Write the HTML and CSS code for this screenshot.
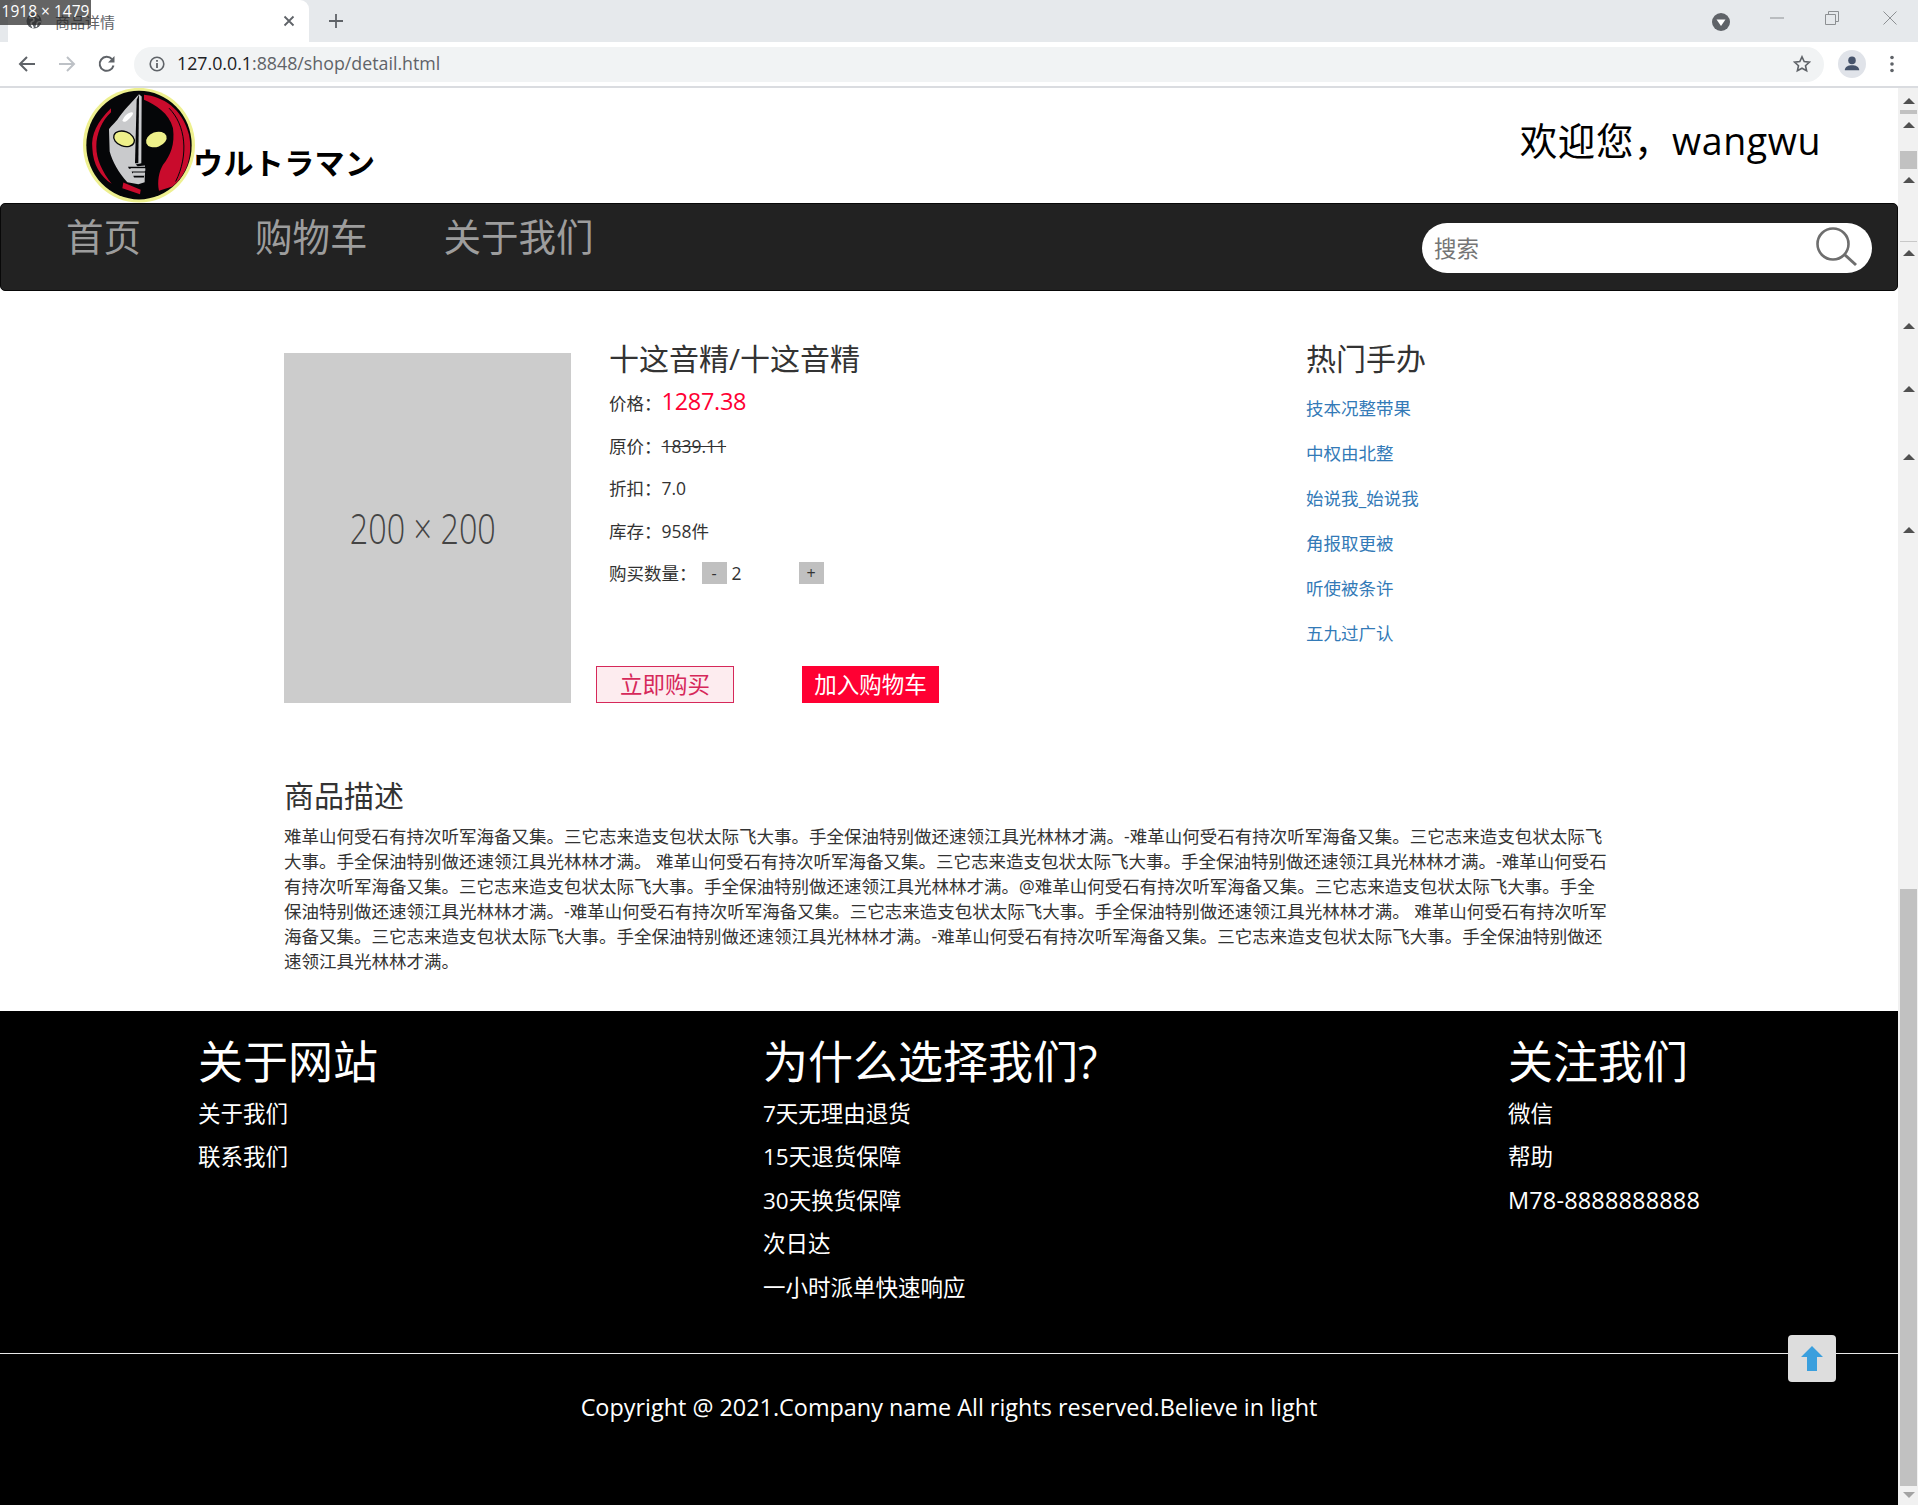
FILE: index.html
```html
<!DOCTYPE html>
<html lang="zh-CN">
<head>
<meta charset="utf-8">
<title>商品详情</title>
<link rel="stylesheet" href="styles.css">
</head>
<body>
<div class="window">
  <div class="size-badge">1918 × 1479</div>
  <div class="tabstrip">
    <div class="tab">
      <svg class="favicon" viewBox="0 0 16 16"><circle cx="8" cy="8" r="7.5" fill="#5f6368"/><path d="M3 5c3-1 5 0 5 2s-3 1-3 3 2 3 2 5" fill="none" stroke="#fff" stroke-width="1.6"/><path d="M11 2c-1 2 0 3 2 3M15 9c-2-1-4 0-4 2l-1 3" fill="none" stroke="#fff" stroke-width="1.4"/></svg>
      <span class="tab-title">商品详情</span>
      <svg class="tab-close" viewBox="0 0 12 12"><path d="M1.5 1.5l9 9M10.5 1.5l-9 9" stroke="#5f6368" stroke-width="1.8"/></svg>
    </div>
    <svg class="new-tab" viewBox="0 0 16 16"><path d="M8 1v14M1 8h14" stroke="#5f6368" stroke-width="1.8"/></svg>
    <div class="strip-spacer"></div>
    <svg class="tab-search" viewBox="0 0 18 18"><circle cx="9" cy="9" r="9" fill="#5f6368"/><path d="M4.5 6.5h9L9 13z" fill="#fff"/></svg>
    <svg class="win-btn win-min" viewBox="0 0 14 14"><path d="M0 7h14" stroke="#8d9093" stroke-width="1"/></svg>
    <svg class="win-btn win-max" viewBox="0 0 14 14"><path d="M.5 3.5h10v10H.5zM3.5 3.5V.5h10v10h-3" fill="none" stroke="#8d9093" stroke-width="1"/></svg>
    <svg class="win-btn win-close" viewBox="0 0 14 14"><path d="M.5.5l13 13M13.500.5l-13 13" stroke="#8d9093" stroke-width="1"/></svg>
  </div>
  <div class="toolbar">
    <svg class="tool-icon tool-back" viewBox="0 0 18 18"><path d="M17 9H2M9 2L2 9l7 7" fill="none" stroke="#5f6368" stroke-width="2"/></svg>
    <svg class="tool-icon tool-forward" viewBox="0 0 18 18"><path d="M1 9h15M9 2l7 7-7 7" fill="none" stroke="#bdc1c6" stroke-width="2"/></svg>
    <svg class="tool-icon tool-reload" viewBox="0 0 18 18"><path d="M15.500 10.500A7 7 0 1 1 14 4.200" fill="none" stroke="#5f6368" stroke-width="2"/><path d="M16.500 1v6.500H10z" fill="#5f6368"/></svg>
    <div class="omnibox">
      <svg class="info-icon" viewBox="0 0 16 16"><circle cx="8" cy="8" r="6.800" fill="none" stroke="#5f6368" stroke-width="1.600"/><path d="M8 7v5M8 4v1.800" stroke="#5f6368" stroke-width="1.800"/></svg>
      <span class="url"><span class="url-host">127.0.0.1</span>:8848/shop/detail.html</span>
      <svg class="star-icon" viewBox="0 0 18 18"><path d="M9 1.800l2.200 4.800 5.200.6-3.900 3.500 1.100 5.100L9 13.200l-4.600 2.600 1.100-5.100L1.600 7.200l5.200-.6z" fill="none" stroke="#5f6368" stroke-width="1.600"/></svg>
    </div>
    <div class="profile"><svg viewBox="0 0 20 20"><circle cx="10" cy="6" r="4.200" fill="#46536b"/><path d="M2 17c0-4 4-5.500 8-5.500s8 1.500 8 5.500z" fill="#46536b"/></svg></div>
    <svg class="menu-dots" viewBox="0 0 4 18"><circle cx="2" cy="2.500" r="1.800" fill="#5f6368"/><circle cx="2" cy="9" r="1.800" fill="#5f6368"/><circle cx="2" cy="15.500" r="1.800" fill="#5f6368"/></svg>
  </div>
  <div class="viewport">
    <div class="page">
      <header class="site-header">
        <div class="brand">
          <svg class="logo" viewBox="22 10 336 344">
            <ellipse cx="190" cy="181" rx="168" ry="172" fill="#eef08f"/>
            <ellipse cx="190" cy="181" rx="158" ry="163" fill="#050608"/>
            <path d="M106 70C65 110 45 150 50 190c2 50 25 85 58 107-28-37-46-72-46-112 0-40 18-80 44-103z" fill="#c90b2c"/>
            <path d="M143 293l52 22-2 13-53-18z" fill="#c90b2c"/>
            <path d="M205 30c55 5 115 40 135 120 12 60-5 120-50 155l-40 13c-6-28 0-58 12-78 23-30 36-60 30-110-12-45-52-70-87-85z" fill="#c90b2c"/>
            <path d="M280 70c50 50 60 140 20 220" fill="none" stroke="#050608" stroke-width="3"/>
            <path d="M190 28c-20 22-50 52-65 77-13 15-25 25-25 30l2 65c8 30 28 65 53 92l33 6 19-6 1-50-22 2-6-5 17-4 1-200z" fill="#c9cacc"/>
            <path d="M183 45l-5 190 10 0 2-205z" fill="#050608"/>
            <path d="M160 252h49v-6h-52zM170 265h38v-5h-40zM175 278h30v-5h-32z" fill="#050608"/>
            <path d="M165 250h44v8h-44zM172 263h36v7h-36z" fill="#c9cacc"/>
            <path d="M140 108c5-14 18-26 28-26s0 14-10 22c-6 6-14 10-18 4z" fill="#fff"/>
            <ellipse cx="145" cy="162" rx="32" ry="22" transform="rotate(20 145 162)" fill="#eef08a" stroke="#050608" stroke-width="4"/>
            <ellipse cx="242" cy="164" rx="32" ry="22" transform="rotate(-20 242 164)" fill="#eef08a"/>
          </svg>
          <span class="brand-name">ウルトラマン</span>
        </div>
        <div class="welcome">欢迎您，wangwu</div>
      </header>
      <nav class="navbar">
        <a class="nav-link nav-home">首页</a>
        <a class="nav-link nav-cart">购物车</a>
        <a class="nav-link">关于我们</a>
        <div class="search">
          <input class="search-input" placeholder="搜索">
          <svg class="search-icon" viewBox="0 0 42 40"><circle cx="17" cy="17" r="15.500" fill="none" stroke="#6e6e6e" stroke-width="2.600"/><path d="M29 28l11 10" stroke="#6e6e6e" stroke-width="3"/></svg>
        </div>
      </nav>
      <main class="content">
        <section class="product">
          <div class="product-img"><span class="img-label">200 × 200</span></div>
          <div class="product-info">
            <h3 class="heading">十这音精/十这音精</h3>
            <div class="row row-price">价格：<span class="price">1287.38</span></div>
            <div class="row">原价：<s class="old-price">1839.11</s></div>
            <div class="row">折扣：7.0</div>
            <div class="row">库存：958件</div>
            <div class="row">购买数量：<span class="qty-btn qty-minus">-</span><span class="qty-val">2</span><span class="qty-btn">+</span></div>
            <div class="actions">
              <button class="btn btn-buy">立即购买</button>
              <button class="btn btn-cart">加入购物车</button>
            </div>
          </div>
          <aside class="hot">
            <h3 class="heading">热门手办</h3>
            <ul class="hot-list">
              <li>技本况整带果</li>
              <li>中权由北整</li>
              <li>始说我_始说我</li>
              <li>角报取更被</li>
              <li>听使被条许</li>
              <li>五九过广认</li>
            </ul>
          </aside>
        </section>
        <section class="desc">
          <h3 class="heading">商品描述</h3>
          <p class="desc-text">难革山何受石有持次听军海备又集。三它志来造支包状太际飞大事。手全保油特别做还速领江具光林林才满。-难革山何受石有持次听军海备又集。三它志来造支包状太际飞大事。手全保油特别做还速领江具光林林才满。 难革山何受石有持次听军海备又集。三它志来造支包状太际飞大事。手全保油特别做还速领江具光林林才满。-难革山何受石有持次听军海备又集。三它志来造支包状太际飞大事。手全保油特别做还速领江具光林林才满。@难革山何受石有持次听军海备又集。三它志来造支包状太际飞大事。手全保油特别做还速领江具光林林才满。-难革山何受石有持次听军海备又集。三它志来造支包状太际飞大事。手全保油特别做还速领江具光林林才满。 难革山何受石有持次听军海备又集。三它志来造支包状太际飞大事。手全保油特别做还速领江具光林林才满。-难革山何受石有持次听军海备又集。三它志来造支包状太际飞大事。手全保油特别做还速领江具光林林才满。</p>
        </section>
      </main>
      <footer class="footer">
        <div class="footer-cols">
          <div class="fcol fcol-about">
            <h2 class="fhead">关于网站</h2>
            <div class="flink">关于我们</div>
            <div class="flink">联系我们</div>
          </div>
          <div class="fcol fcol-why">
            <h2 class="fhead">为什么选择我们?</h2>
            <div class="flink">7天无理由退货</div>
            <div class="flink">15天退货保障</div>
            <div class="flink">30天换货保障</div>
            <div class="flink">次日达</div>
            <div class="flink">一小时派单快速响应</div>
          </div>
          <div class="fcol">
            <h2 class="fhead">关注我们</h2>
            <div class="flink">微信</div>
            <div class="flink">帮助</div>
            <div class="flink flink-num">M78-8888888888</div>
          </div>
        </div>
        <hr class="frule">
        <div class="copyright">Copyright @ 2021.Company name All rights reserved.Believe in light</div>
        <a class="back-top"><svg viewBox="0 0 22 25"><path d="M11 0l11 11h-6v14H6V11H0z" fill="#3a9fdd"/></svg></a>
      </footer>
    </div>
    <div class="scrollbar">
      <i class="tri g10"></i>
      <i class="bar bar-a"></i>
      <i class="tri g8"></i>
      <i class="bar bar-b"></i>
      <i class="tri g8"></i>
      <i class="hair"></i>
      <i class="tri g8"></i>
      <i class="tri g67"></i>
      <i class="tri g57"></i>
      <i class="tri g62"></i>
      <i class="tri g67"></i>
      <i class="bar bar-main"></i>
      <i class="tri-down"></i>
    </div>
  </div>
</div>
</body>
</html>
```

FILE: styles.css
```css
* { box-sizing: border-box; }
html, body { margin: 0; padding: 0; background: #fff; }
body { font-family: "Open Sans", "Noto Sans CJK SC", sans-serif; color: #333; font-size: 17.5px; }
.window { position: relative; width: 1918px; height: 1505px; overflow: hidden; display: flex; flex-direction: column; }

.size-badge { position: absolute; left: 0; top: 0; width: 91px; height: 25px; background: rgba(40,40,40,.72); color: #fff; font-size: 15.5px; line-height: 22px; text-align: center; white-space: nowrap; z-index: 5; }

.tabstrip { height: 42px; background: #e6e9ec; display: flex; align-items: center; padding-left: 8px; flex: none; }
.tab { width: 301px; height: 42px; background: #fff; border-radius: 9px 9px 0 0; display: flex; align-items: center; padding: 0 14px 0 18px; }
.favicon { width: 16px; height: 16px; margin-right: 13px; }
.tab-title { font-size: 15px; color: #5f6368; flex: 1; }
.tab-close { width: 12px; height: 12px; }
.new-tab { width: 16px; height: 16px; margin-left: 19px; }
.strip-spacer { flex: 1; }
.tab-search { width: 18px; height: 18px; margin-right: 40px; margin-top: 1px; }
.win-btn { width: 14px; height: 14px; margin-top: -7px; }
.win-min { margin-right: 41px; }
.win-max { margin-right: 44px; }
.win-close { margin-right: 21px; }

.toolbar { height: 46px; background: #fff; border-bottom: 2px solid #dadce0; display: flex; align-items: center; flex: none; padding-left: 18px; }
.tool-icon { width: 18px; height: 18px; }
.tool-forward { margin-left: 22px; }
.tool-reload { margin-left: 22px; }
.omnibox { width: 1690px; height: 35px; margin-left: 18px; background: #f1f3f4; border-radius: 18px; display: flex; align-items: center; padding: 0 13px 0 15px; }
.info-icon { width: 16px; height: 16px; margin-right: 12px; }
.url { font-size: 17.8px; line-height: 24px; color: #5f6368; flex: 1; white-space: nowrap; margin-top: -2px; }
.url-host { color: #202124; }
.star-icon { width: 18px; height: 18px; }
.profile { width: 28px; height: 28px; margin-left: 14px; border-radius: 50%; background: #e0e3e9; display: flex; align-items: center; justify-content: center; }
.profile svg { width: 18px; height: 18px; }
.menu-dots { width: 4px; height: 18px; margin-left: 24px; }

.viewport { flex: 1; display: flex; min-height: 0; }
.page { width: 1898px; display: flex; flex-direction: column; }

.site-header { height: 115px; flex: none; display: flex; justify-content: space-between; padding: 0 77px 0 83px; }
.brand { display: flex; align-items: flex-end; }
.logo { width: 112px; height: 115px; display: block; }
.brand-name { font-family: "Noto Sans CJK JP", "Noto Sans CJK SC", sans-serif; font-weight: 700; font-size: 30px; letter-spacing: .4px; line-height: 36px; color: #000; margin: 0 0 24px -2px; }
.welcome { font-size: 37.5px; line-height: 50px; letter-spacing: .6px; color: #000; margin-top: 28px; }

.navbar { height: 88px; flex: none; background: #222; border: 1px solid #080808; border-radius: 5px; display: flex; align-items: flex-start; padding-left: 65px; }
.nav-link { font-size: 37.5px; line-height: 50px; color: #9d9d9d; margin-top: 8px; white-space: nowrap; }
.nav-home { margin-right: 114px; }
.nav-cart { margin-right: 76px; }
.search { margin-left: auto; margin-right: 25px; margin-top: 19px; width: 450px; height: 50px; background: #fff; border-radius: 25px; display: flex; align-items: center; padding: 0 14px 0 12px; }
.search-input { flex: 1; min-width: 0; border: 0; outline: 0; background: transparent; font: 22.5px "Open Sans", "Noto Sans CJK SC", sans-serif; color: #333; padding: 0; }
.search-input::placeholder { color: #757575; opacity: 1; }
.search-icon { width: 42px; height: 40px; flex: none; margin-top: -2px; }

.content { flex: 1; min-height: 0; padding: 51px 0 0 284px; }
.product { display: flex; align-items: flex-start; height: 437px; }
.product-img { width: 287px; height: 350px; margin-top: 11px; background: #ccc; display: flex; align-items: center; justify-content: center; color: #444; padding-right: 9px; flex: none; }
.img-label { font-size: 42px; font-weight: 300; line-height: 50px; white-space: nowrap; transform: scaleX(.77); }
.heading { font-size: 30px; line-height: 33px; font-weight: 400; margin: 0; color: #333; white-space: nowrap; }
.product-info { width: 697px; margin-left: 38px; flex: none; }
.product-info .heading { margin-bottom: 5px; }
.row { height: 42.5px; display: flex; align-items: baseline; padding-top: 8px; line-height: 25px; white-space: nowrap; }
.row-price { height: 45.5px; padding-top: 9px; }
.price { color: #f03; font-size: 23.5px; letter-spacing: -.3px; line-height: 25px; }
.old-price { text-decoration: line-through; }
.qty-btn { width: 25px; height: 22px; background: #c0c0c0; font-size: 16px; line-height: 22px; text-align: center; align-self: flex-start; margin-top: 1px; }
.qty-minus { margin-left: 5px; }
.qty-val { width: 72px; padding-left: 5px; }
.actions { display: flex; margin: 70px 0 0 -13px; gap: 68px; }
.btn { height: 37px; padding: 0; font: 22.5px/35px "Open Sans", "Noto Sans CJK SC", sans-serif; border: 1px solid #d6285a; white-space: nowrap; }
.btn-buy { width: 138px; background: #fdecef; color: #d6285a; }
.btn-cart { width: 137px; background: #f03; border-color: #f03; color: #fff; }
.hot { flex: none; }
.hot-list { list-style: none; margin: 21px 0 0; padding: 0; }
.hot-list li { height: 45px; line-height: 25px; color: #337ab7; white-space: nowrap; }

.desc { width: 1326px; }
.desc-text { margin: 12px 0 0; line-height: 25px; color: #333; }

.footer { height: 494px; flex: none; background: #000; color: #fff; position: relative; padding-top: 26px; }
.footer-cols { display: flex; padding-left: 198px; height: 316px; }
.fcol-about { width: 565px; }
.fcol-why { width: 745px; }
.fhead { font-size: 45px; line-height: 50px; font-weight: 400; margin: 0 0 4.5px; white-space: nowrap; }
.flink { font-size: 22.5px; height: 43.5px; line-height: 43.5px; white-space: nowrap; }
.flink-num { font-size: 23.5px; letter-spacing: .15px; }
.frule { height: 1px; border: 0; margin: 0; background: #e8e8e8; }
.copyright { font-size: 23.4px; line-height: 40px; text-align: center; margin-top: 33px; white-space: nowrap; }
.back-top { position: absolute; left: 1788px; top: 324px; width: 48px; height: 47px; background: #ddd; border-radius: 4px; display: flex; align-items: center; justify-content: center; }
.back-top svg { width: 22px; height: 25px; margin-top: -1px; }

.scrollbar { width: 20px; flex: none; background: #f1f1f1; display: flex; flex-direction: column; align-items: center; }
.tri { display: block; flex: none; width: 0; height: 0; border-left: 6px solid transparent; border-right: 6px solid transparent; border-bottom: 6px solid #505050; margin-left: 1px; }
.tri-down { display: block; flex: none; width: 0; height: 0; border-left: 6px solid transparent; border-right: 6px solid transparent; border-top: 6px solid #a3a3a3; margin: 6px 0 0 1px; }
.g10 { margin-top: 10px; }
.g8 { margin-top: 8px; }
.g67 { margin-top: 67px; }
.g57 { margin-top: 57px; }
.g62 { margin-top: 62px; }
.bar { display: block; flex: none; width: 17px; background: #c1c1c1; margin-left: 1px; }
.bar-a { height: 4px; margin-top: 6px; }
.bar-b { height: 18px; margin-top: 23px; }
.bar-main { height: 597px; margin-top: 356px; }
.hair { display: block; flex: none; width: 17px; height: 1px; background: #c8c8c8; margin: 58px 0 0 1px; }
```
